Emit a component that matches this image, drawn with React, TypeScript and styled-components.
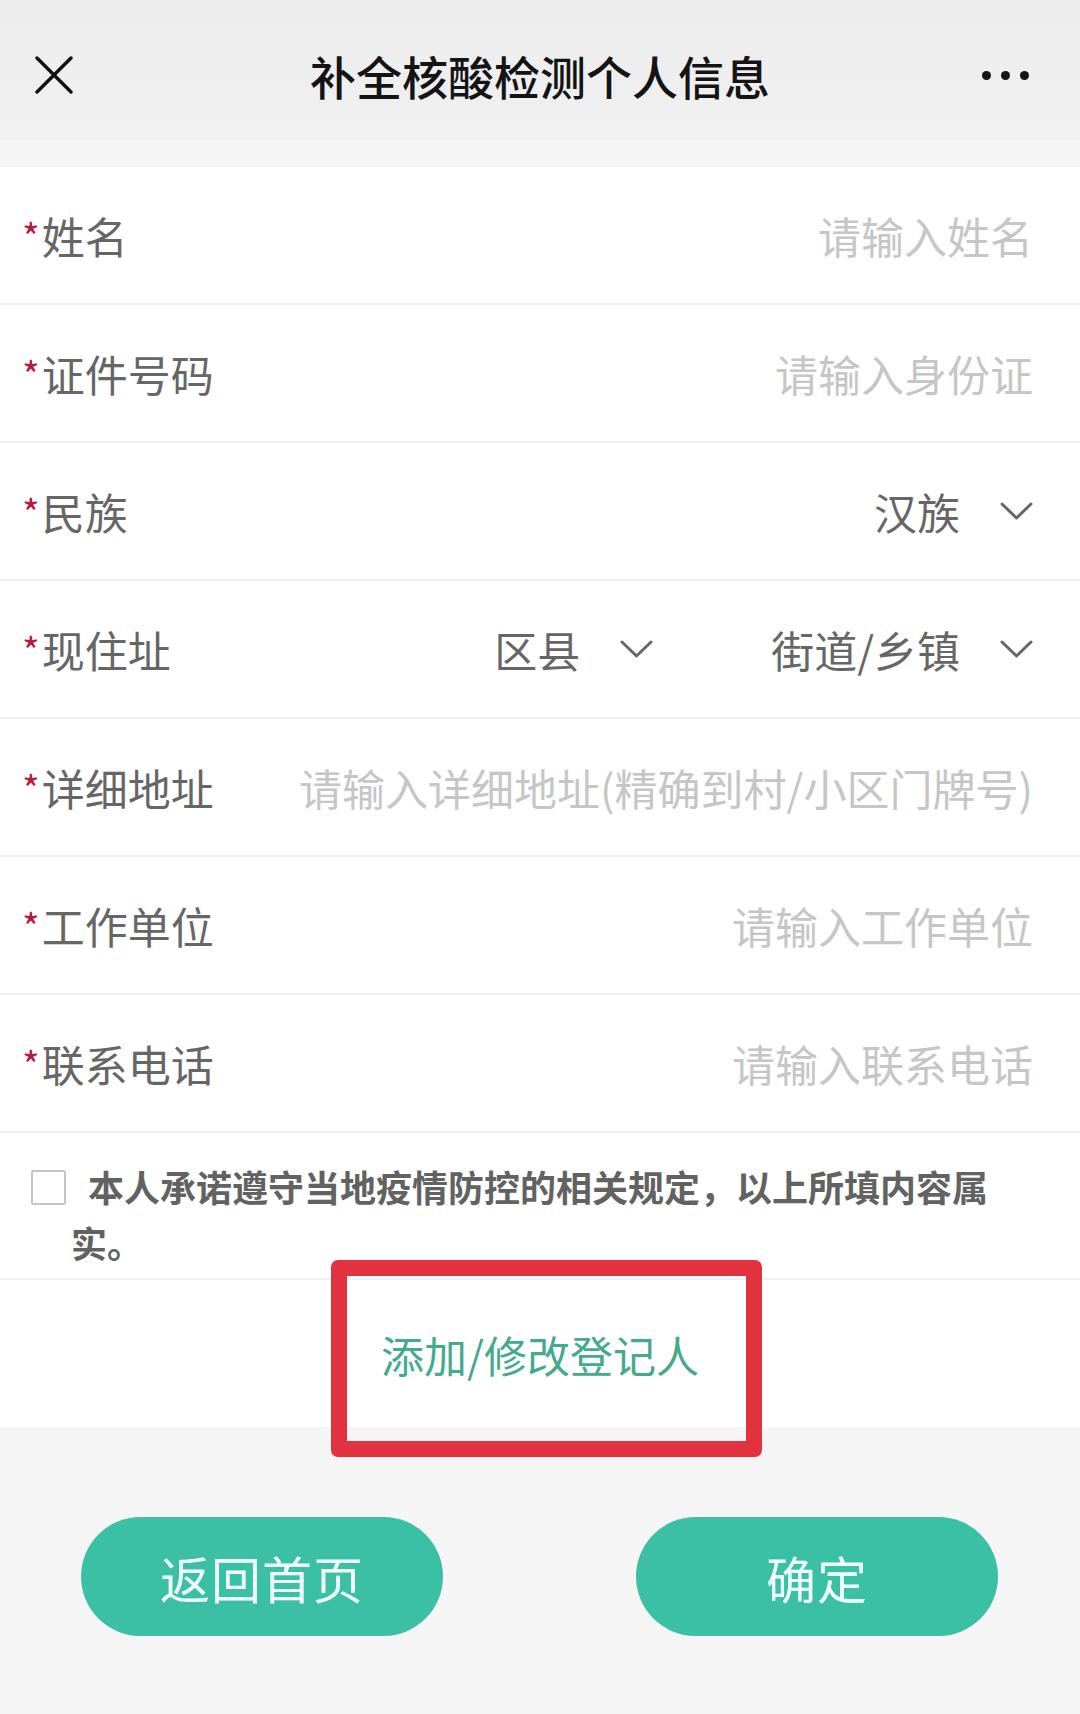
import React from 'react';
import styled, { createGlobalStyle } from 'styled-components';

const GlobalStyle = createGlobalStyle`
  html, body {
    margin: 0;
    padding: 0;
    background: #f5f5f5;
  }
  body {
    font-family: "Noto Sans CJK SC", "Noto Sans", sans-serif;
  }
  * {
    box-sizing: border-box;
  }
`;

const Page = styled.div`
  width: 1080px;
  min-height: 1714px;
  background: #f5f5f5;
`;

const Header = styled.div`
  height: 140px;
  padding: 10px 35px 0 35px;
  display: grid;
  grid-template-columns: 1fr auto 1fr;
  align-items: center;
  background: linear-gradient(#ededed, #efefef 75%, #f2f2f2);
`;

const IconButton = styled.div<{ align: 'left' | 'right' }>`
  display: flex;
  justify-content: ${p => (p.align === 'left' ? 'flex-start' : 'flex-end')};
  align-items: center;
`;

const Title = styled.h1`
  margin: 0;
  font-size: 46px;
  font-weight: 500;
  color: #141414;
`;

const Dots = styled.div`
  display: flex;
  gap: 10px;
  margin-right: 16px;
`;

const Dot = styled.span`
  width: 9px;
  height: 9px;
  border-radius: 50%;
  background: #151515;
`;

const Form = styled.div`
  margin-top: 27px;
  background: #fff;
`;

const Row = styled.div`
  height: 138px;
  display: flex;
  align-items: center;
  padding: 0 47px 0 22px;
  border-bottom: 2px solid #f1f1f1;
`;

const Label = styled.div`
  flex: none;
  display: flex;
  align-items: center;
  font-size: 43px;
  color: #666;
  white-space: nowrap;
`;

const Star = styled.span`
  color: #b8173f;
  font-size: 38px;
  margin-right: 2px;
  position: relative;
  top: 0;
`;

const Input = styled.input`
  flex: 1;
  min-width: 0;
  border: none;
  outline: none;
  background: transparent;
  text-align: right;
  font-family: inherit;
  font-size: 43px;
  color: #555;
  padding: 0;

  &::placeholder {
    color: #c6c6c6;
  }
`;

const Selects = styled.div`
  flex: 1;
  display: flex;
  justify-content: flex-end;
  gap: 118px;
`;

const Select = styled.div`
  display: flex;
  align-items: center;
  gap: 40px;
  font-size: 43px;
  color: #666;
`;

const CommitRow = styled.div`
  display: flex;
  align-items: flex-start;
  padding: 25px 75px 8px 31px;
  border-bottom: 2px solid #f1f1f1;
`;

const CheckBox = styled.span`
  flex: none;
  width: 35px;
  height: 35px;
  margin-top: 12px;
  margin-right: 5px;
  border: 2px solid #c4c4c4;
  border-radius: 2px;
  background: #fff;
`;

const CommitText = styled.p`
  margin: 0;
  font-size: 36px;
  line-height: 56px;
  font-weight: 700;
  color: #626262;
  text-indent: 17px;
`;

const AddRow = styled.div`
  position: relative;
  height: 147px;
  display: flex;
  align-items: center;
  justify-content: center;
  background: #fff;
`;

const AddLink = styled.span`
  font-size: 43px;
  color: #45a98e;
`;

const Highlight = styled.div`
  position: absolute;
  left: 331px;
  top: -20px;
  width: 431px;
  height: 197px;
  border: 16px solid #e2323f;
  border-radius: 7px;
  pointer-events: none;
`;

const Actions = styled.div`
  display: flex;
  justify-content: space-between;
  padding: 90px 82px 0 81px;
`;

const PillButton = styled.button`
  width: 362px;
  height: 119px;
  border: none;
  border-radius: 60px;
  background: #3bbfa5;
  color: #f0fffb;
  font-family: inherit;
  font-size: 50px;
  letter-spacing: 1px;
  cursor: pointer;
`;

const Chevron = () => (
  <svg width="33" height="18" viewBox="0 0 33 18" fill="none">
    <path d="M2 2 L16.5 16 L31 2" stroke="#666" strokeWidth="3" strokeLinecap="round" strokeLinejoin="round" />
  </svg>
);

const CloseIcon = () => (
  <svg width="38" height="38" viewBox="0 0 38 38" fill="none">
    <path d="M2 2 L36 36 M36 2 L2 36" stroke="#111" strokeWidth="3.4" strokeLinecap="round" />
  </svg>
);

const fields = [
  { label: '姓名', placeholder: '请输入姓名' },
  { label: '证件号码', placeholder: '请输入身份证' },
];

const moreFields = [
  { label: '详细地址', placeholder: '请输入详细地址(精确到村/小区门牌号)' },
  { label: '工作单位', placeholder: '请输入工作单位' },
  { label: '联系电话', placeholder: '请输入联系电话' },
];

const App: React.FC = () => {
  return (
    <Page>
      <GlobalStyle />
      <Header>
        <IconButton align="left">
          <CloseIcon />
        </IconButton>
        <Title>补全核酸检测个人信息</Title>
        <IconButton align="right">
          <Dots>
            <Dot />
            <Dot />
            <Dot />
          </Dots>
        </IconButton>
      </Header>

      <Form>
        {fields.map(f => (
          <Row key={f.label}>
            <Label><Star>*</Star>{f.label}</Label>
            <Input placeholder={f.placeholder} />
          </Row>
        ))}

        <Row>
          <Label><Star>*</Star>民族</Label>
          <Selects>
            <Select>汉族<Chevron /></Select>
          </Selects>
        </Row>

        <Row>
          <Label><Star>*</Star>现住址</Label>
          <Selects>
            <Select>区县<Chevron /></Select>
            <Select>街道/乡镇<Chevron /></Select>
          </Selects>
        </Row>

        {moreFields.map(f => (
          <Row key={f.label}>
            <Label><Star>*</Star>{f.label}</Label>
            <Input placeholder={f.placeholder} />
          </Row>
        ))}

        <CommitRow>
          <CheckBox />
          <CommitText>本人承诺遵守当地疫情防控的相关规定，以上所填内容属实。</CommitText>
        </CommitRow>

        <AddRow>
          <AddLink>添加/修改登记人</AddLink>
          <Highlight />
        </AddRow>
      </Form>

      <Actions>
        <PillButton>返回首页</PillButton>
        <PillButton>确定</PillButton>
      </Actions>
    </Page>
  );
};

export default App;
